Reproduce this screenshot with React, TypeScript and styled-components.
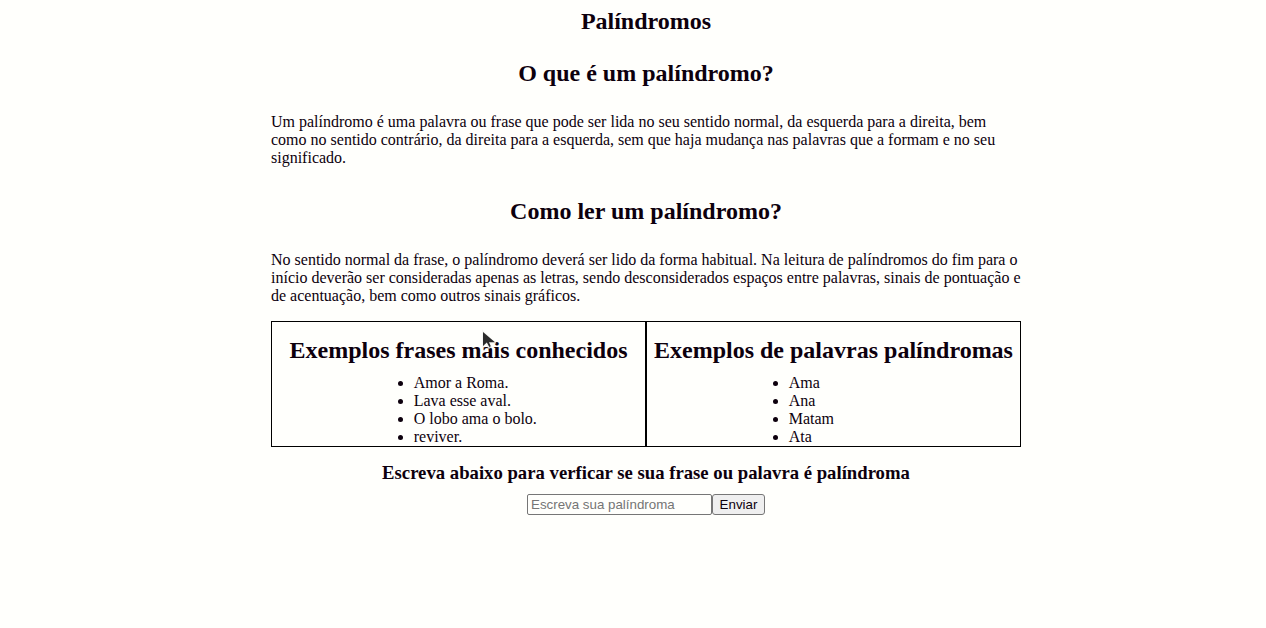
import React from "react";
import styled, { createGlobalStyle } from "styled-components";

const GlobalStyle = createGlobalStyle`
  body {
    margin: 0;
    background: #fffffc;
    color: #0d000d;
    font-family: "Liberation Serif", "Times New Roman", serif;
    font-size: 16px;
    line-height: 18px;
  }
`;

const Page = styled.div`
  padding: 8px 0 8px 26px;
`;

const Content = styled.main`
  position: relative;
  max-width: 750px;
  margin: 0 auto;
`;

const Title = styled.h1`
  margin: 0 0 11px;
  font-size: 24px;
  line-height: 26px;
  text-align: center;
`;

const Section = styled.section`
  padding-top: 15px;
`;

const Heading = styled.h2`
  margin: 0 0 27px;
  font-size: 24px;
  line-height: 26px;
  text-align: center;
`;

const Paragraph = styled.p`
  margin: 0;
  padding-bottom: 16px;
`;

const Examples = styled.div`
  display: grid;
  grid-template-columns: 1fr 1fr;
`;

const ExampleBox = styled.section`
  border: 1px solid #000;
  padding-top: 15px;
`;

const ExampleHeading = styled.h2`
  margin: 0 0 11px;
  font-size: 24px;
  line-height: 26px;
  text-align: center;
`;

const ExampleList = styled.ul`
  margin: 0;
  padding-left: 38%;
`;

const Form = styled.form`
  display: flex;
  flex-wrap: wrap;
  justify-content: center;
`;

const FormHeading = styled.h3`
  flex-basis: 100%;
  margin: 15px 0 11px;
  line-height: 21px;
  text-align: center;
`;

const TextField = styled.input`
  box-sizing: border-box;
  width: 185px;
  height: 21px;
  margin: 0;
  padding: 1px 2px 1px 3px;
  border: 1px solid #767676;
  border-radius: 2px;
  background: #fffffc;
  color: #0d000d;
  font: 0.8333rem "Liberation Sans", Arial, sans-serif;

  &::placeholder {
    color: #757575;
  }
`;

const SubmitButton = styled.button`
  box-sizing: border-box;
  width: 53px;
  height: 21px;
  margin: 0;
  padding: 0;
  border: 1px solid #767676;
  border-radius: 3px;
  background: #efefef;
  color: #0d000d;
  font: 0.8333rem "Liberation Sans", Arial, sans-serif;
`;

const Pointer = styled.svg`
  position: absolute;
  top: 321px;
  left: 209px;
  pointer-events: none;
`;

const phrases = ["Amor a Roma.", "Lava esse aval.", "O lobo ama o bolo.", "reviver."];
const words = ["Ama", "Ana", "Matam", "Ata"];

function Example({ title, items }: { title: string; items: string[] }) {
  return (
    <ExampleBox>
      <ExampleHeading>{title}</ExampleHeading>
      <ExampleList>
        {items.map((item) => (
          <li key={item}>{item}</li>
        ))}
      </ExampleList>
    </ExampleBox>
  );
}

export default function App() {
  return (
    <Page>
      <GlobalStyle />
      <Content>
        <Title>Palíndromos</Title>
        <Section>
          <Heading>O que é um palíndromo?</Heading>
          <Paragraph>
            Um palíndromo é uma palavra ou frase que pode ser lida no seu sentido normal, da
            esquerda para a direita, bem como no sentido contrário, da direita para a esquerda, sem
            que haja mudança nas palavras que a formam e no seu significado.
          </Paragraph>
        </Section>
        <Section>
          <Heading>Como ler um palíndromo?</Heading>
          <Paragraph>
            No sentido normal da frase, o palíndromo deverá ser lido da forma habitual. Na leitura
            de palíndromos do fim para o início deverão ser consideradas apenas as letras, sendo
            desconsiderados espaços entre palavras, sinais de pontuação e de acentuação, bem como
            outros sinais gráficos.
          </Paragraph>
        </Section>
        <Examples>
          <Example title="Exemplos frases mais conhecidos" items={phrases} />
          <Example title="Exemplos de palavras palíndromas" items={words} />
        </Examples>
        <Form onSubmit={(event) => event.preventDefault()}>
          <FormHeading>
            <label htmlFor="palindrome">
              Escreva abaixo para verficar se sua frase ou palavra é palíndroma
            </label>
          </FormHeading>
          <TextField id="palindrome" type="text" placeholder="Escreva sua palíndroma" />
          <SubmitButton type="submit">Enviar</SubmitButton>
        </Form>
        <Pointer width="18" height="24" viewBox="0 0 18 24" aria-hidden="true">
          <path
            d="M2 0.5V19L6 15.5L8.5 20L12 18.5L10.5 14.5H16.5Z"
            fill="#f4f4f0"
            opacity="0.8"
          />
          <path d="M3 3V17L6.8 13.6L9.3 18L10.8 17.3L9 13.3H15Z" fill="#2b2b2b" />
        </Pointer>
      </Content>
    </Page>
  );
}
